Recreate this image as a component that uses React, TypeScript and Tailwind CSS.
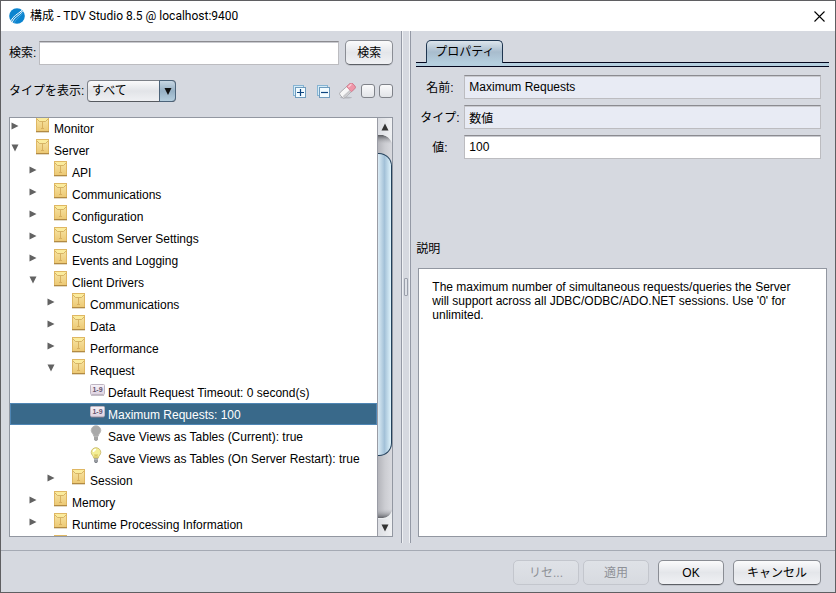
import { FC, ReactNode, useState } from "react";
import clsx from "clsx";

type NodeIcon = "folder" | "number" | "bulb-off" | "bulb-on";

interface TreeNode {
  id: string;
  label: string;
  icon: NodeIcon;
  children?: TreeNode[];
}

const folder = (id: string, label: string, children: TreeNode[] = []): TreeNode => ({
  id,
  label,
  icon: "folder",
  children,
});

const TREE: TreeNode[] = [
  folder("monitor", "Monitor"),
  folder("server", "Server", [
    folder("api", "API"),
    folder("comm", "Communications"),
    folder("conf", "Configuration"),
    folder("custom", "Custom Server Settings"),
    folder("events", "Events and Logging"),
    folder("drivers", "Client Drivers", [
      folder("d-comm", "Communications"),
      folder("d-data", "Data"),
      folder("d-perf", "Performance"),
      folder("d-request", "Request", [
        { id: "timeout", label: "Default Request Timeout: 0 second(s)", icon: "number" },
        { id: "max", label: "Maximum Requests: 100", icon: "number" },
        { id: "current", label: "Save Views as Tables (Current): true", icon: "bulb-off" },
        { id: "restart", label: "Save Views as Tables (On Server Restart): true", icon: "bulb-on" },
      ]),
      folder("d-session", "Session"),
    ]),
    folder("memory", "Memory"),
    folder("runtime", "Runtime Processing Information"),
    folder("more", ""),
  ]),
];

const INDENT = 18;

const FolderIcon = () => (
  <svg width="14" height="16" viewBox="0 0 14 16" aria-hidden="true">
    <defs>
      <linearGradient id="folderFill" x1="0" y1="0" x2="0" y2="1">
        <stop offset="0" stopColor="#f8e6a6" />
        <stop offset="1" stopColor="#ecc873" />
      </linearGradient>
    </defs>
    <rect x="0.5" y="0.5" width="12" height="14" fill="url(#folderFill)" stroke="#dfb763" />
    <path d="M1 1h11v1L9.5 4.5h-6L1 2z" fill="#fbeb9c" />
    <path d="M1 2L3.5 4.5h6L12 2" fill="none" stroke="#cda658" strokeWidth="0.8" />
    <path d="M6.5 5V11M5 11.5h3" fill="none" stroke="#d4ac5a" strokeWidth="0.9" />
    <path d="M0 14.5h13" stroke="#b28a43" />
    <path d="M0 15.5h13" stroke="#e3dac6" />
  </svg>
);

const NumberIcon = () => (
  <svg width="15" height="12" viewBox="0 0 15 12" className="mt-[3px]" aria-hidden="true">
    <defs>
      <linearGradient id="numberFill" x1="0" y1="0" x2="0" y2="1">
        <stop offset="0" stopColor="#f8f3f9" />
        <stop offset="1" stopColor="#ddd2e0" />
      </linearGradient>
    </defs>
    <rect x="0.5" y="0.5" width="14" height="10" rx="1" fill="url(#numberFill)" stroke="#beb5c2" />
    <path d="M1 11.5h13" stroke="#8b8090" strokeOpacity="0.5" />
    <text x="7.5" y="8" textAnchor="middle" fontSize="7" fontWeight="700" fontFamily="Liberation Sans, sans-serif" fill="#66566f">
      1-9
    </text>
  </svg>
);

const BulbIcon: FC<{ on?: boolean }> = ({ on }) => (
  <svg width="12" height="17" viewBox="0 0 12 17" aria-hidden="true">
    <path
      d="M6 0.7a4.800 4.800 0 0 0-4.800 4.800c0 2.200 2.300 3.300 2.600 5.700h4.400c0.300-2.400 2.600-3.500 2.600-5.700A4.800 4.800 0 0 0 6 0.700z"
      fill={on ? "#f3ee96" : "#a9a9a9"}
      stroke={on ? "#c9bb72" : "#b4b4b4"}
      strokeWidth="0.9"
    />
    {on && <path d="M3.500 5a2.500 2.500 0 0 1 2.500-2.500" stroke="#fff" strokeWidth="1.500" fill="none" />}
    {on && <path d="M5 11V7.500L6 8.500L7 7.500V11" stroke="#c9a93c" strokeWidth="0.7" fill="none" />}
    <path d="M4 11.500h4v3L6.800 16H5.200L4 14.500z" fill={on ? "#7d8188" : "#a4a4a4"} />
    {on && <path d="M4 12.500h4M4 14h4" stroke="#d6d8db" strokeWidth="0.6" />}
  </svg>
);

const NODE_ICONS: Record<NodeIcon, ReactNode> = {
  folder: <FolderIcon />,
  number: <NumberIcon />,
  "bulb-off": <BulbIcon />,
  "bulb-on": <BulbIcon on />,
};

const Triangle: FC<{ open: boolean }> = ({ open }) => (
  <svg width="8" height="8" viewBox="0 0 8 8" aria-hidden="true">
    <path d={open ? "M0.500 0.500h7L4 7.500z" : "M0.500 0.500v7L7.500 4z"} fill="#626262" />
  </svg>
);

const AppLogo = () => (
  <svg width="16" height="16" viewBox="0 0 16 16" aria-hidden="true">
    <circle cx="8" cy="8" r="7.800" fill="#0b84cf" />
    <path d="M2 12.800C4 8 8.500 6.500 13.200 2.200" stroke="#fff" strokeWidth="1" fill="none" />
    <path d="M3.200 14.200C5 8.800 10 8.500 13.800 2.800" stroke="#fff" strokeWidth="0.9" fill="none" />
    <path d="M5 15C7 11 10.500 9.500 14 4.500" stroke="#7cc0ea" strokeWidth="0.5" fill="none" />
  </svg>
);

const StackIcon: FC<{ plus?: boolean }> = ({ plus }) => (
  <svg width="13" height="13" viewBox="0 0 13 13" aria-hidden="true">
    <rect x="0.5" y="0.5" width="10" height="10" fill="#d5ecf8" stroke="#86b4d3" />
    <rect x="2.500" y="2.500" width="10" height="10" fill="#f2fbff" stroke="#6f9bbd" />
    <path d={plus ? "M4 7.500h7M7.500 4v7" : "M4 7.500h7"} stroke="#0d4580" strokeWidth="1.200" />
  </svg>
);

const EraserIcon = () => (
  <svg width="17" height="16" viewBox="0 0 17 16" aria-hidden="true">
    <ellipse cx="7" cy="14.600" rx="6" ry="1" fill="#b4b6bc" />
    <g transform="rotate(-42 8.500 7.500)">
      <rect x="0" y="4" width="17" height="7" rx="2" fill="#f7f7f7" stroke="#a2a2a6" strokeWidth="0.8" />
      <path d="M1 8.500h9.500v2.100H2.200Q1 10.400 1 8.500z" fill="#c9c9cc" />
      <path d="M10.500 4H15q2 0 2 2v3q0 2-2 2h-4.500z" fill="#ef96a8" stroke="#d3788c" strokeWidth="0.8" />
      <path d="M11.500 5.500h4" stroke="#fbcdd6" strokeWidth="1.400" />
    </g>
  </svg>
);

const BUTTON_BASE =
  "h-[25px] rounded-[5px] border bg-linear-to-b text-xs leading-none flex items-center justify-center";

interface PushButtonProps {
  children: ReactNode;
  className?: string;
  disabled?: boolean;
}

const PushButton: FC<PushButtonProps> = ({ children, className, disabled }) => (
  <button
    type="button"
    disabled={disabled}
    className={clsx(
      BUTTON_BASE,
      disabled
        ? "border-[#c3c6cd] from-[#dfe2e7] to-[#d7dae0] text-[#8e9197]"
        : "border-[#8a8d94] border-b-[#5d6066] from-[#fbfbfc] via-[#e4e6ea] to-[#f0f1f4] text-black shadow-[0_1px_0_#c0c3ca]",
      className
    )}
  >
    {children}
  </button>
);

interface TreeRowsProps {
  nodes: TreeNode[];
  level: number;
  open: string[];
  selected: string;
  onToggle: (id: string) => void;
  onSelect: (id: string) => void;
}

const TreeRows: FC<TreeRowsProps> = ({ nodes, level, open, selected, onToggle, onSelect }) => (
  <>
    {nodes.map((node) => {
      const isOpen = open.includes(node.id);
      const isSelected = selected === node.id;
      return (
        <li key={node.id}>
          <div
            className={clsx(
              "flex h-[22px] items-start",
              isSelected && "bg-[#39698a] text-white inset-ring inset-ring-[#4f86b4]"
            )}
            style={{ paddingLeft: level * INDENT + 1 }}
          >
            {node.children ? (
              <button
                type="button"
                aria-label={node.label}
                aria-expanded={isOpen}
                onClick={() => onToggle(node.id)}
                className="mt-[5px] w-[25px] shrink-0"
              >
                <Triangle open={isOpen} />
              </button>
            ) : (
              <span className="w-[25px] shrink-0" />
            )}
            <button
              type="button"
              onClick={() => onSelect(node.id)}
              className="flex items-start whitespace-nowrap"
            >
              <span className="flex w-[18px] shrink-0">{NODE_ICONS[node.icon]}</span>
              <span className="pt-[3px] leading-[18px]">{node.label}</span>
            </button>
          </div>
          {node.children && isOpen && (
            <ul>
              <TreeRows
                nodes={node.children}
                level={level + 1}
                open={open}
                selected={selected}
                onToggle={onToggle}
                onSelect={onSelect}
              />
            </ul>
          )}
        </li>
      );
    })}
  </>
);

const ScrollBar = () => (
  <div className="flex w-[15px] shrink-0 flex-col border-l border-[#9a9ca5] bg-linear-to-r from-[#b4b5bb] via-[#cccdd2] to-[#d9dadf]">
    <button
      type="button"
      aria-label="Up"
      className="flex h-[17px] items-center justify-center bg-linear-to-r from-[#dcdee3] to-[#f0f1f3]"
    >
      <svg width="8" height="8" viewBox="0 0 8 8">
        <path d="M4 0.500L7.500 7.500h-7z" fill="#333" />
      </svg>
    </button>
    <div className="flex flex-1 flex-col">
      <svg className="h-[18px] w-full" viewBox="0 0 14 18" preserveAspectRatio="none">
        <defs>
          <linearGradient id="trackTop" x1="0" y1="0" x2="0" y2="1">
            <stop offset="0" stopColor="#55575c" />
            <stop offset="0.500" stopColor="#b4b5ba" stopOpacity="0" />
          </linearGradient>
        </defs>
        <path d="M0 0h5Q11 1 14 8V18H0z" fill="url(#trackTop)" />
        <path d="M5 0H14V8Q11 1 5 0z" fill="#eceef0" />
      </svg>
      <div className="grow-[301] rounded-r-[13px] border border-l-0 border-[#23415c] bg-linear-to-r from-[#dcecf5] via-[#a3c1d8] to-[#e0f4fc]" />
      <div className="grow-[53]" />
      <svg className="h-[10px] w-full" viewBox="0 0 14 10" preserveAspectRatio="none">
        <defs>
          <linearGradient id="trackBottom" x1="0" y1="0" x2="0" y2="1">
            <stop offset="0" stopColor="#b4b5ba" stopOpacity="0" />
            <stop offset="1" stopColor="#606268" />
          </linearGradient>
        </defs>
        <path d="M0 0H14V2Q11 9 5 9H0z" fill="url(#trackBottom)" />
        <path d="M5 9Q11 9 14 2V10H0V9z" fill="#eceef0" />
      </svg>
    </div>
    <button
      type="button"
      aria-label="Down"
      className="flex h-[17px] items-center justify-center bg-linear-to-r from-[#dcdee3] to-[#f0f1f3]"
    >
      <svg width="8" height="8" viewBox="0 0 8 8">
        <path d="M0.500 0.500h7L4 7.500z" fill="#333" />
      </svg>
    </button>
  </div>
);

const FIELD_BASE =
  "h-6 w-full min-w-0 border border-[#bcbcc0] border-t-[#8b8b90] px-1 shadow-[inset_0_1px_0_#c9cacf] outline-none";

interface FieldProps {
  id: string;
  label: string;
  value: string;
  readOnly?: boolean;
}

const Field: FC<FieldProps> = ({ id, label, value, readOnly }) => (
  <div className="flex items-center">
    <label htmlFor={id} className="w-12 shrink-0 pr-px pt-px text-center">
      {label}
    </label>
    <input
      id={id}
      defaultValue={value}
      readOnly={readOnly}
      className={clsx(FIELD_BASE, readOnly ? "bg-[#e8ebf4]" : "bg-white")}
    />
  </div>
);

const CHECKBOX =
  "size-[14px] appearance-none rounded-[3px] border border-[#7f8289] bg-linear-to-b from-[#fafafb] to-[#e2e4e8]";

export default function App() {
  const [open, setOpen] = useState(["server", "drivers", "d-request"]);
  const [selected, setSelected] = useState("max");

  const toggle = (id: string) =>
    setOpen((ids) => (ids.includes(id) ? ids.filter((x) => x !== id) : [...ids, id]));

  return (
    <div className="flex h-screen flex-col border border-[#5f5f62] bg-[#d6d9e0] font-['Liberation_Sans','Noto_Sans_CJK_JP',sans-serif] text-xs text-black">
      <header className="flex h-[30px] shrink-0 items-center bg-white pl-2 pr-[10px]">
        <AppLogo />
        <h1 className="ml-[5px] flex-1 font-[Roboto,'Noto_Sans_CJK_JP',sans-serif]">
          構成 - TDV Studio 8.5 @ localhost:9400
        </h1>
        <button type="button" aria-label="Close">
          <svg width="11" height="11" viewBox="0 0 11 11">
            <path d="M0.500 0.500l10 10M10.500 0.500l-10 10" stroke="#000" strokeWidth="1.100" />
          </svg>
        </button>
      </header>

      <main className="flex min-h-0 flex-1">
        <section className="flex w-[48%] shrink-0 flex-col px-2 pb-[7px] pt-[9px]">
          <div className="flex items-center">
            <label htmlFor="search" className="w-[30px] shrink-0 whitespace-nowrap">
              検索:
            </label>
            <input id="search" className={clsx(FIELD_BASE, "bg-white")} />
            <PushButton className="ml-[6px] w-12 shrink-0">検索</PushButton>
          </div>

          <div className="mt-[15px] flex h-[22px] items-center">
            <label htmlFor="type" className="w-[78px] shrink-0 whitespace-nowrap">
              タイプを表示:
            </label>
            <div className="relative">
              <select
                id="type"
                className="block h-[22px] w-[89px] appearance-none rounded-[4px] border border-[#7d8188] border-b-[#56595f] bg-linear-to-b from-[#fafafb] via-[#e2e4e8] to-[#eff0f3] pl-1 outline-none"
              >
                <option>すべて</option>
              </select>
              <span className="pointer-events-none absolute inset-y-0 right-0 flex w-[17px] items-center justify-center rounded-r-[4px] border border-[#4c6379] bg-linear-to-b from-[#c8d7e3] via-[#96b0c4] to-[#b5cede]">
                <svg width="8" height="7" viewBox="0 0 8 7">
                  <path d="M0.500 0h7L4 7z" fill="#111" />
                </svg>
              </span>
            </div>
            <div className="ml-auto flex items-center">
              <button type="button" aria-label="Expand all" className="mr-[11px]">
                <StackIcon plus />
              </button>
              <button type="button" aria-label="Collapse all" className="mr-[9px]">
                <StackIcon />
              </button>
              <button type="button" aria-label="Clear" className="mr-[5px]">
                <EraserIcon />
              </button>
              <input type="checkbox" aria-label="Filter 1" className={clsx(CHECKBOX, "mr-1")} />
              <input type="checkbox" aria-label="Filter 2" className={CHECKBOX} />
            </div>
          </div>

          <div className="mt-[15px] flex min-h-0 flex-1 border border-[#9297a1] bg-white">
            <div className="min-w-0 flex-1 overflow-hidden">
              <ul className="-mt-px">
                <TreeRows
                  nodes={TREE}
                  level={0}
                  open={open}
                  selected={selected}
                  onToggle={toggle}
                  onSelect={setSelected}
                />
              </ul>
            </div>
            <ScrollBar />
          </div>
        </section>

        <div className="mb-px flex w-[10px] shrink-0 items-center justify-center border-x border-[#9499a5] bg-[#d6d9e0] shadow-[inset_1px_0_0_#eff1f4,inset_-1px_0_0_#eff1f4]">
          <span className="h-[18px] w-[4px] rounded-[1px] border border-[#9ba0ab] bg-[#dfe2e8]" />
        </div>

        <section className="flex min-w-0 flex-1 flex-col pb-[7px] pl-[5px] pr-[6px] pt-[9px]">
          <div className="flex h-[22px] pl-[10px]">
            <button
              type="button"
              className="relative z-10 h-[23px] w-[77px] rounded-t-[5px] border border-b-0 border-[#1f3650] bg-linear-to-b from-[#dde5ec] via-[#a8bccd] to-[#b5cfdf] leading-none"
            >
              プロパティ
            </button>
          </div>
          <div className="h-[5px] border-y border-[#04081f] bg-[#b5cfdf]" />
          <div className="mt-2 flex flex-col gap-[6px] pr-2">
            <Field id="name" label="名前:" value="Maximum Requests" readOnly />
            <Field id="kind" label="タイプ:" value="数値" readOnly />
            <Field id="value" label="値:" value="100" />
          </div>
          <h2 className="mt-[82px] leading-4">説明</h2>
          <div className="mx-[2px] mt-[11px] flex-1 border border-[#9297a1] bg-white py-[11px] pl-[13px] pr-5 leading-[14px]">
            The maximum number of simultaneous requests/queries the Server will support across all
            JDBC/ODBC/ADO.NET sessions. Use '0' for unlimited.
          </div>
        </section>
      </main>

      <footer className="mt-[6px] flex h-[42px] shrink-0 justify-end border-t border-[#a5aab4] pr-[14px] pt-[9px]">
        <PushButton disabled className="mr-1 w-[66px]">
          リセ...
        </PushButton>
        <PushButton disabled className="mr-[9px] w-[66px]">
          適用
        </PushButton>
        <PushButton className="mr-[9px] w-[66px]">OK</PushButton>
        <PushButton className="w-[88px]">キャンセル</PushButton>
      </footer>
    </div>
  );
}
